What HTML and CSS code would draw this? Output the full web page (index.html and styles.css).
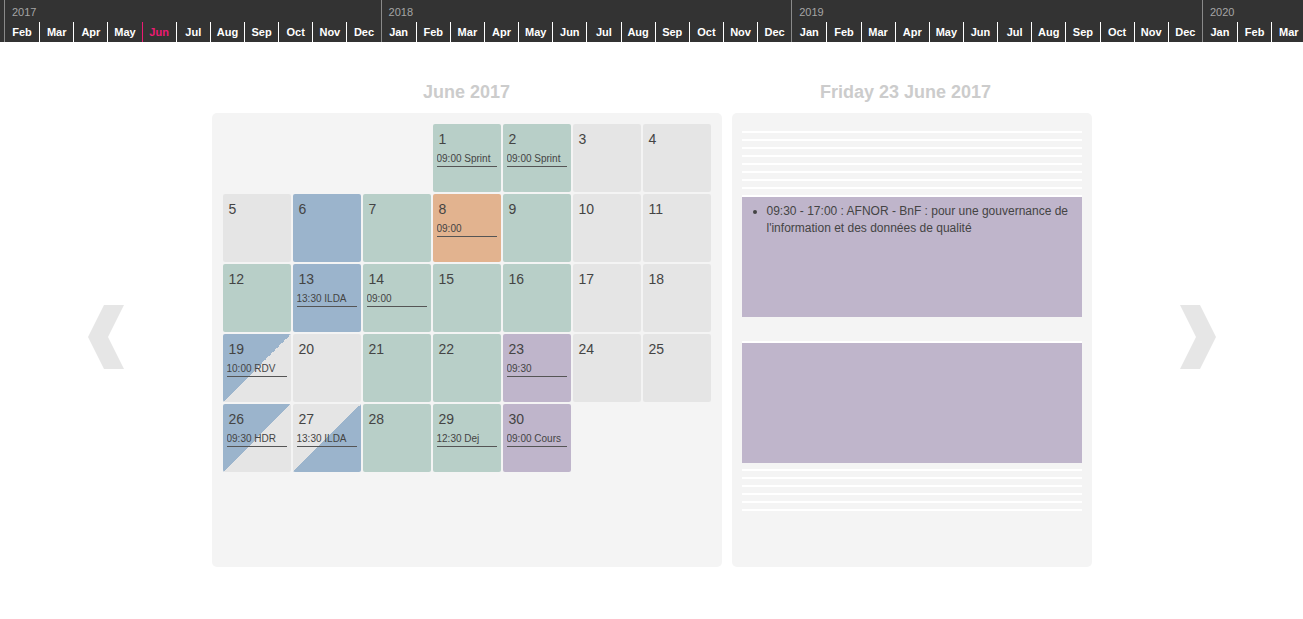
FILE: index.html
```html
<!DOCTYPE html>
<html lang="en">
<head>
<meta charset="utf-8">
<title>Calendar</title>
<link rel="stylesheet" href="styles.css">
</head>
<body>
<header class="timeline">
  <div class="year">
    <div class="year-label">2017</div>
    <div class="months">
      <span class="month">Feb</span><span class="month">Mar</span><span class="month">Apr</span><span class="month">May</span><span class="month active">Jun</span><span class="month">Jul</span><span class="month">Aug</span><span class="month">Sep</span><span class="month">Oct</span><span class="month">Nov</span><span class="month">Dec</span>
    </div>
  </div>
  <div class="year">
    <div class="year-label">2018</div>
    <div class="months">
      <span class="month">Jan</span><span class="month">Feb</span><span class="month">Mar</span><span class="month">Apr</span><span class="month">May</span><span class="month">Jun</span><span class="month">Jul</span><span class="month">Aug</span><span class="month">Sep</span><span class="month">Oct</span><span class="month">Nov</span><span class="month">Dec</span>
    </div>
  </div>
  <div class="year">
    <div class="year-label">2019</div>
    <div class="months">
      <span class="month">Jan</span><span class="month">Feb</span><span class="month">Mar</span><span class="month">Apr</span><span class="month">May</span><span class="month">Jun</span><span class="month">Jul</span><span class="month">Aug</span><span class="month">Sep</span><span class="month">Oct</span><span class="month">Nov</span><span class="month">Dec</span>
    </div>
  </div>
  <div class="year">
    <div class="year-label">2020</div>
    <div class="months">
      <span class="month">Jan</span><span class="month">Feb</span><span class="month">Mar</span>
    </div>
  </div>
</header>

<main class="stage">
  <div class="nav nav-prev">
    <svg width="38" height="64" viewBox="0 0 38 64"><polygon points="17,0 37,0 21,32 37,64 17,64 1,32" fill="#e6e6e6"/></svg>
  </div>

  <section class="month-col">
    <h2 class="col-title">June 2017</h2>
    <div class="panel cal-panel">
      <div class="grid">
        <div class="cell empty"></div>
        <div class="cell empty"></div>
        <div class="cell empty"></div>
        <div class="cell green"><div class="num">1</div><div class="ev">09:00 Sprint</div></div>
        <div class="cell green"><div class="num">2</div><div class="ev">09:00 Sprint</div></div>
        <div class="cell grey"><div class="num">3</div></div>
        <div class="cell grey"><div class="num">4</div></div>

        <div class="cell grey"><div class="num">5</div></div>
        <div class="cell blue"><div class="num">6</div></div>
        <div class="cell green"><div class="num">7</div></div>
        <div class="cell orange"><div class="num">8</div><div class="ev">09:00</div></div>
        <div class="cell green"><div class="num">9</div></div>
        <div class="cell grey"><div class="num">10</div></div>
        <div class="cell grey"><div class="num">11</div></div>

        <div class="cell green"><div class="num">12</div></div>
        <div class="cell blue"><div class="num">13</div><div class="ev">13:30 ILDA</div></div>
        <div class="cell green"><div class="num">14</div><div class="ev">09:00</div></div>
        <div class="cell green"><div class="num">15</div></div>
        <div class="cell green"><div class="num">16</div></div>
        <div class="cell grey"><div class="num">17</div></div>
        <div class="cell grey"><div class="num">18</div></div>

        <div class="cell blue-grey"><div class="num">19</div><div class="ev">10:00 RDV</div></div>
        <div class="cell grey"><div class="num">20</div></div>
        <div class="cell green"><div class="num">21</div></div>
        <div class="cell green"><div class="num">22</div></div>
        <div class="cell purple"><div class="num">23</div><div class="ev">09:30</div></div>
        <div class="cell grey"><div class="num">24</div></div>
        <div class="cell grey"><div class="num">25</div></div>

        <div class="cell blue-grey"><div class="num">26</div><div class="ev">09:30 HDR</div></div>
        <div class="cell grey-blue"><div class="num">27</div><div class="ev">13:30 ILDA</div></div>
        <div class="cell green"><div class="num">28</div></div>
        <div class="cell green"><div class="num">29</div><div class="ev">12:30 Dej</div></div>
        <div class="cell purple"><div class="num">30</div><div class="ev">09:00 Cours</div></div>
      </div>
    </div>
  </section>

  <section class="day-col">
    <h2 class="col-title day-title">Friday 23 June 2017</h2>
    <div class="panel day-panel">
      <div class="slots slots-top"></div>
      <div class="day-event">
        <ul class="ev-list">
          <li>09:30 - 17:00 : AFNOR - BnF : pour une gouvernance de l'information et des données de qualité</li>
        </ul>
      </div>
      <div class="day-gap"></div>
      <div class="day-event second"></div>
      <div class="slots slots-bottom"></div>
    </div>
  </section>

  <div class="nav nav-next">
    <svg width="38" height="64" viewBox="0 0 38 64"><polygon points="1,0 21,0 37,32 21,64 1,64 17,32" fill="#e6e6e6"/></svg>
  </div>
</main>
</body>
</html>
```

FILE: styles.css
```css
html, body {
  margin: 0;
  padding: 0;
  background: #fff;
  font-family: "Liberation Sans", Arial, Helvetica, sans-serif;
}

/* ---------- timeline bar ---------- */
.timeline {
  display: flex;
  height: 42px;
  background: #333;
  padding-left: 4px;
  overflow: hidden;
  white-space: nowrap;
}

.year {
  flex-shrink: 0;
  display: flex;
  flex-direction: column;
  border-left: 1px solid #8a8a8a;
}

.year-label {
  height: 22px;
  box-sizing: border-box;
  padding: 6px 0 0 7px;
  font-size: 11px;
  line-height: 13px;
  color: #a5a5a5;
}

.months {
  display: flex;
  height: 20px;
}

.month {
  width: 34.15px;
  flex-shrink: 0;
  box-sizing: border-box;
  border-left: 1px solid #fff;
  text-align: center;
  font-size: 11px;
  font-weight: bold;
  line-height: 20px;
  color: #fff;
}

.month:first-child {
  border-left: none;
}

.month.active {
  color: #ec1a73;
  border-left-color: #ec1a73;
}

/* ---------- main stage ---------- */
.stage {
  display: flex;
  justify-content: center;
  align-items: flex-start;
  padding-top: 39px;
}

.nav {
  width: 38px;
  height: 64px;
  margin-top: 224px;
  flex-shrink: 0;
}

.nav svg {
  display: block;
}

.nav-prev {
  margin-right: 87px;
}

.nav-next {
  margin-left: 87px;
}

.month-col {
  width: 510px;
}

.day-col {
  width: 360px;
  margin-left: 10px;
}

.col-title {
  margin: 0 0 10px;
  font-size: 18px;
  line-height: 22px;
  font-weight: bold;
  color: #cccccc;
  text-align: center;
}

.day-title {
  padding-right: 12px;
}

.panel {
  height: 454px;
  box-sizing: border-box;
  padding: 10px;
  background: #f4f4f4;
  border-radius: 5px;
}

/* ---------- month grid ---------- */
.grid {
  display: grid;
  grid-template-columns: repeat(7, 68px);
  grid-auto-rows: 68px;
  gap: 2px;
  padding: 1px;
}

.cell {
  box-sizing: border-box;
  padding-top: 7px;
  border-radius: 2px;
  color: #444;
  overflow: hidden;
}

.cell.empty { background: transparent; }
.cell.grey { background: #e5e5e5; }
.cell.green { background: #b8cfc8; }
.cell.blue { background: #9bb4cc; }
.cell.orange { background: #e2b38f; }
.cell.purple { background: #bfb5cb; }
.cell.blue-grey { background: linear-gradient(to bottom right, #9bb4cc 50%, #e5e5e5 50%); }
.cell.grey-blue { background: linear-gradient(to bottom right, #e5e5e5 50%, #9bb4cc 50%); }

.num {
  padding-left: 6px;
  font-size: 14px;
  line-height: 16px;
}

.ev {
  margin: 6px 4px 0;
  padding-bottom: 1px;
  font-size: 10px;
  line-height: 12px;
  border-bottom: 1px solid #555;
  white-space: nowrap;
  overflow: hidden;
}

/* ---------- day panel ---------- */
.slots-top {
  margin-top: 8px;
  height: 66px;
  background: repeating-linear-gradient(to bottom, #fff 0, #fff 2px, transparent 2px, transparent 8px);
}

.day-event {
  height: 120px;
  box-sizing: border-box;
  padding-top: 6px;
  background: #bfb5cb;
}

.day-event.second {
  height: 122px;
  padding-top: 0;
  border-top: 2px solid #fff;
}

.day-gap {
  height: 24px;
}

.ev-list {
  margin: 0;
  padding-left: 25px;
  font-size: 12px;
  line-height: 17px;
  color: #444;
}

.slots-bottom {
  height: 48px;
  background: repeating-linear-gradient(to bottom, transparent 0, transparent 6px, #fff 6px, #fff 8px);
}
```
